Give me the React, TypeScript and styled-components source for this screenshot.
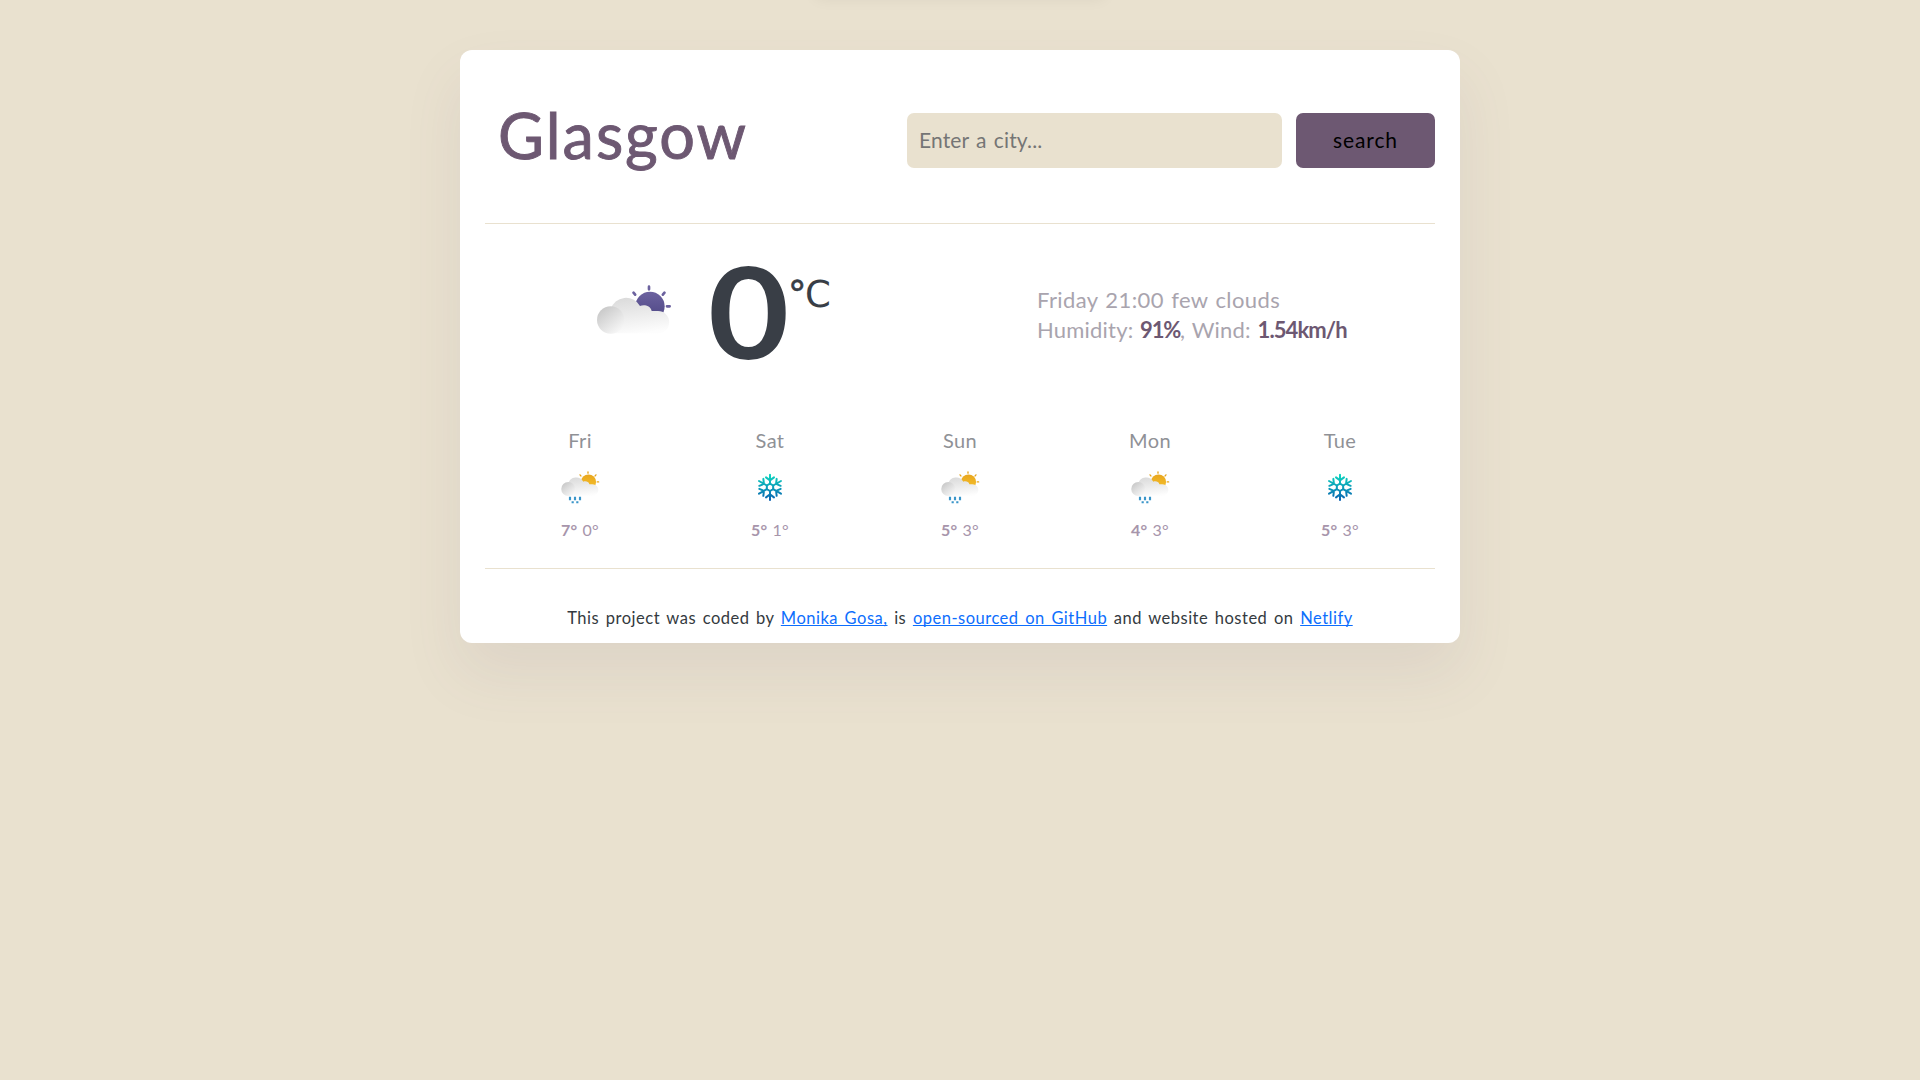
import React from "react";
import styled, { createGlobalStyle } from "styled-components";

const GlobalStyle = createGlobalStyle`
  *, *::before, *::after { box-sizing: border-box; }
  body {
    margin: 0;
    background: #e9e1cf;
    font-family: Lato, "Open Sans", sans-serif;
    font-size: 16px;
    color: #343a40;
  }
`;

const Page = styled.div`
  min-height: 1080px;
  padding-top: 50px;
  overflow: hidden;
`;

const Toast = styled.div`
  position: absolute;
  top: -50px;
  left: 815px;
  width: 290px;
  height: 40px;
  border-radius: 6px;
  box-shadow: 0 8px 16px rgba(0, 0, 0, 0.065);
`;

const Card = styled.main`
  width: 1000px;
  height: 593px;
  margin: 0 auto;
  padding: 0 25px;
  background: #fff;
  border-radius: 12px;
  box-shadow: 0 30px 60px rgba(109, 88, 114, 0.095);
`;

const Header = styled.header`
  display: flex;
  justify-content: space-between;
  align-items: flex-start;
  height: 174px;
  border-bottom: 1px solid #e9e1cf;
`;

const City = styled.h1`
  margin: 46px 0 0 13px;
  font-size: 63px;
  font-weight: 400;
  line-height: 77px;
  letter-spacing: 2px;
  color: #6d5872;
  -webkit-text-stroke: 0.9px #6d5872;
`;

const SearchForm = styled.form`
  display: flex;
  gap: 14px;
  margin-top: 63px;
`;

const SearchInput = styled.input`
  width: 375px;
  height: 55px;
  padding: 0 12px 2px;
  border: 0;
  border-radius: 7px;
  background: #e9e1cf;
  font-family: inherit;
  font-size: 21px;
  letter-spacing: 0.15px;
  word-spacing: 1.6px;
  &::placeholder {
    color: #757575;
    opacity: 1;
  }
`;

const SearchButton = styled.button`
  width: 139px;
  height: 55px;
  padding: 0 0 2px;
  border: 0;
  border-radius: 7px;
  background: #6d5872;
  color: #000;
  font-family: inherit;
  font-size: 21px;
  letter-spacing: 0.9px;
`;

const Current = styled.section`
  display: flex;
  align-items: flex-start;
  height: 204px;
  padding-left: 105px;
`;

const CurrentIcon = styled.div`
  width: 90px;
  height: 66px;
  margin-top: 52px;
  svg { display: block; }
`;

const Temperature = styled.div`
  margin: 23px 0 0 28px;
  width: 80px;
  font-size: 126px;
  font-weight: 700;
  line-height: 128px;
  color: #393e46;
  transform: scaleX(1.11);
  transform-origin: left;
`;

const Unit = styled.div`
  width: 47px;
  margin-top: 52px;
  font-family: "DejaVu Sans", sans-serif;
  font-size: 37px;
  line-height: 37px;
  letter-spacing: -1.5px;
  color: #393e46;
`;

const Degree = styled.span`
  -webkit-text-stroke: 0.6px #393e46;
`;

const Details = styled.div`
  margin: 61px 0 0 202px;
  font-size: 22px;
  line-height: 30px;
  letter-spacing: 0.4px;
  word-spacing: 1.3px;
  white-space: nowrap;
  color: #a9a4ae;
`;

const Measurements = styled.div`
  letter-spacing: 0.2px;
  word-spacing: 0.9px;
`;

const Value = styled.strong<{ $tracking: number }>`
  color: #6d5872;
  letter-spacing: ${(p) => p.$tracking}px;
`;

const Forecast = styled.section`
  display: grid;
  grid-template-columns: repeat(5, 1fr);
  height: 141px;
  border-bottom: 1px solid #e9e1cf;
`;

const Day = styled.div`
  display: flex;
  flex-direction: column;
  align-items: center;
  svg { display: block; margin: 12px 0 10px; }
`;

const DayName = styled.div`
  font-size: 20px;
  line-height: 24px;
  letter-spacing: 0.4px;
  color: #8f9196;
`;

const Range = styled.div`
  font-size: 16px;
  line-height: 19px;
  letter-spacing: 0.2px;
  word-spacing: 0.8px;
  color: #a795ab;
`;

const Footer = styled.footer`
  padding-top: 37px;
  text-align: center;
  font-size: 16.5px;
  line-height: 24px;
  letter-spacing: 0.5px;
  word-spacing: 1.9px;
  white-space: nowrap;
`;

const Link = styled.a`
  color: #0d6efd;
  text-decoration: underline;
  text-decoration-thickness: 1px;
  text-decoration-skip-ink: none;
  text-underline-offset: 1px;
`;

type CloudProps = { id: string; sunTop: string; sunBottom: string };

function CloudSun({ id, sunTop, sunBottom }: CloudProps) {
  return (
    <>
      <defs>
        <linearGradient id={`${id}-sun`} x1="0" y1="0" x2="0" y2="1">
          <stop offset="0" stopColor={sunTop} />
          <stop offset="1" stopColor={sunBottom} />
        </linearGradient>
        <linearGradient id={`${id}-body`} gradientUnits="userSpaceOnUse" x1="120" y1="60" x2="135" y2="174">
          <stop offset="0" stopColor="#dadada" />
          <stop offset="1" stopColor="#fdfdfd" />
        </linearGradient>
        <linearGradient id={`${id}-puff`} x1="0.1" y1="0.15" x2="0.75" y2="0.95">
          <stop offset="0" stopColor="#c9c9c9" />
          <stop offset="1" stopColor="#f6f6f6" />
        </linearGradient>
      </defs>
      <g stroke={sunTop} strokeWidth="8" strokeLinecap="round">
        <path d="M177 32v8M130.500 50l5 6M223.500 50l-5 6M231 91h8" />
      </g>
      <circle cx="180" cy="91" r="44" fill={`url(#${id}-sun)`} />
      <path
        d="M62 172V100A48 48 0 0 1 150 90C160 85 181 87 185 105H204A33.500 33.500 0 0 1 204 172Z"
        fill={`url(#${id}-body)`}
      />
      <circle cx="62" cy="132" r="41" fill={`url(#${id}-puff)`} />
    </>
  );
}

function RainIcon({ id }: { id: string }) {
  return (
    <svg width="50" height="46" viewBox="0 0 150 138">
      <g transform="translate(8 7) scale(0.514)">
        <CloudSun id={id} sunTop="#e8a61e" sunBottom="#f6c22c" />
      </g>
      <g stroke="#3a95c9" strokeWidth="6.500">
        <path d="M45 98v11M60 98v11M75 98v11M53 112v6M67 112v6" />
      </g>
    </svg>
  );
}

function SnowIcon({ id }: { id: string }) {
  // One arm per 60 degrees, masked so that the gradient stays vertical.
  return (
    <svg width="50" height="46" viewBox="0 0 150 138">
      <defs>
        <linearGradient id={`${id}-ice`} x1="0" y1="0" x2="0" y2="1">
          <stop offset="0" stopColor="#0fdcc0" />
          <stop offset="1" stopColor="#0a5cb0" />
        </linearGradient>
        <mask id={`${id}-mask`} maskUnits="userSpaceOnUse" x="28" y="25" width="94" height="90">
          <g fill="none" stroke="#fff" strokeWidth="6" strokeLinecap="round" strokeLinejoin="round">
            <path d="M75 59l9.500 5.500v11l-9.500 5.500l-9.500 -5.500v-11z" />
            {[0, 60, 120, 180, 240, 300].map((angle) => (
              <path
                key={angle}
                transform={`rotate(${angle} 75 70)`}
                d="M75 59V32M75 49l-12 -9M75 49l12 -9"
              />
            ))}
          </g>
        </mask>
      </defs>
      <rect x="31" y="28" width="88" height="84" fill={`url(#${id}-ice)`} mask={`url(#${id}-mask)`} />
    </svg>
  );
}

const days = [
  { name: "Fri", icon: "rain", high: 7, low: 0 },
  { name: "Sat", icon: "snow", high: 5, low: 1 },
  { name: "Sun", icon: "rain", high: 5, low: 3 },
  { name: "Mon", icon: "rain", high: 4, low: 3 },
  { name: "Tue", icon: "snow", high: 5, low: 3 },
];

export default function App() {
  return (
    <Page>
      <GlobalStyle />
      <Toast />
      <Card>
        <Header>
          <City>Glasgow</City>
          <SearchForm onSubmit={(e) => e.preventDefault()}>
            <SearchInput type="text" placeholder="Enter a city..." />
            <SearchButton type="submit">search</SearchButton>
          </SearchForm>
        </Header>
        <Current>
          <CurrentIcon>
            <svg width="90" height="66" viewBox="0 0 270 198">
              <CloudSun id="now" sunTop="#6c629f" sunBottom="#4c4583" />
            </svg>
          </CurrentIcon>
          <Temperature>0</Temperature>
          <Unit>
            <Degree>°</Degree>C
          </Unit>
          <Details>
            <div>Friday 21:00 few clouds</div>
            <Measurements>
              Humidity: <Value $tracking={-1.2}>91%</Value>, Wind:{" "}
              <Value $tracking={-0.9}>1.54km/h</Value>
            </Measurements>
          </Details>
        </Current>
        <Forecast>
          {days.map((d) => (
            <Day key={d.name}>
              <DayName>{d.name}</DayName>
              {d.icon === "rain" ? <RainIcon id={d.name} /> : <SnowIcon id={d.name} />}
              <Range>
                <strong>{d.high}°</strong> {d.low}°
              </Range>
            </Day>
          ))}
        </Forecast>
        <Footer>
          This project was coded by <Link href="#">Monika Gosa,</Link> is{" "}
          <Link href="#">open-sourced on GitHub</Link> and website hosted on <Link href="#">Netlify</Link>
        </Footer>
      </Card>
    </Page>
  );
}
